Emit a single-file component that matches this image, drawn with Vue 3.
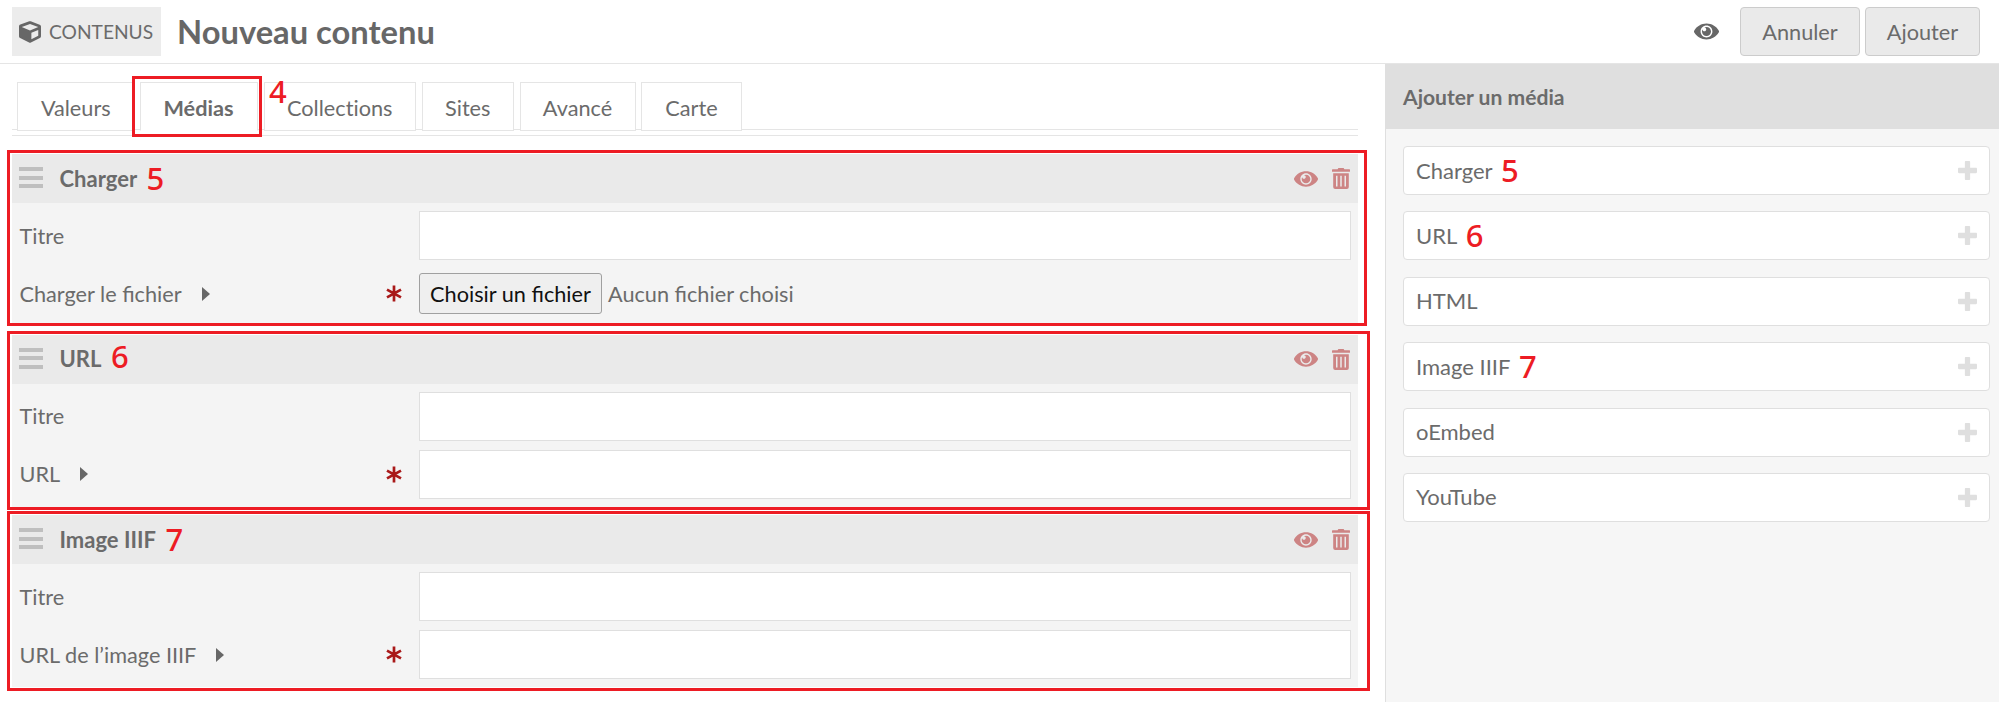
<script setup>
const tabs = [
  { label: 'Valeurs', w: 117.5 },
  { label: 'Médias', w: 118, active: true },
  { label: 'Collections', w: 152.5 },
  { label: 'Sites', w: 92.5 },
  { label: 'Avancé', w: 116 },
  { label: 'Carte', w: 101 },
]
const blocks = [
  { title: 'Charger', mark: '5', field: 'Charger le fichier', file: true },
  { title: 'URL', mark: '6', field: 'URL' },
  { title: 'Image IIIF', mark: '7', field: 'URL de l’image IIIF' },
]
const media = [
  { label: 'Charger', mark: '5' },
  { label: 'URL', mark: '6' },
  { label: 'HTML' },
  { label: 'Image IIIF', mark: '7' },
  { label: 'oEmbed' },
  { label: 'YouTube' },
]
const eye = 'M569.354 231.631C512.969 135.949 407.81 72 288 72 168.14 72 63.004 135.994 6.646 231.631a47.999 47.999 0 0 0 0 48.739C63.031 376.051 168.19 440 288 440c119.86 0 224.996-63.994 281.354-159.631a47.997 47.997 0 0 0 0-48.738zM288 392c-75.162 0-136-60.827-136-136 0-75.162 60.826-136 136-136 75.162 0 136 60.826 136 136 0 75.162-60.826 136-136 136zm104-136c0 57.438-46.562 104-104 104s-104-46.562-104-104c0-17.708 4.431-34.379 12.236-48.973l-.001.032c0 23.651 19.173 42.823 42.824 42.823s42.824-19.173 42.824-42.823c0-23.651-19.173-42.824-42.824-42.824l-.032.001C253.621 156.431 270.292 152 288 152c57.438 0 104 46.562 104 104z'
const cube = 'M239.1 6.3l-208 78c-18.7 7-31.1 25-31.1 45v225.1c0 18.2 10.3 34.8 26.5 42.9l208 104c13.5 6.8 29.4 6.8 42.9 0l208-104c16.3-8.1 26.5-24.8 26.5-42.9V129.3c0-20-12.4-37.9-31.1-44.9l-208-78C262 2.2 250 2.2 239.1 6.3zM256 68.4l192 72v1.1l-192 78-192-78v-1.1l192-72zm32 356V275.5l160-65v133.9l-160 80z'
const plus = 'M448 294.2v-76.4c0-13.3-10.7-24-24-24H286.2V56c0-13.3-10.7-24-24-24h-76.4c-13.3 0-24 10.7-24 24v137.8H24c-13.3 0-24 10.7-24 24v76.4c0 13.3 10.7 24 24 24h137.8V456c0 13.3 10.7 24 24 24h76.4c13.3 0 24-10.7 24-24V318.2H424c13.3 0 24-10.7 24-24z'
</script>

<template>
  <div class="page">
    <header class="top">
      <div class="crumb">
        <svg class="cube" viewBox="0 0 512 512"><path :d="cube" /></svg>
        <span>CONTENUS</span>
      </div>
      <h1>Nouveau contenu</h1>
      <div class="actions">
        <svg class="eye" viewBox="0 64 576 384"><path :d="eye" /></svg>
        <button class="btn annuler">Annuler</button>
        <button class="btn ajouter">Ajouter</button>
      </div>
    </header>
    <div class="body">
      <main>
        <nav class="tabs">
          <div v-for="t in tabs" :key="t.label" class="tab" :class="{ active: t.active }" :style="{ width: t.w + 'px' }">
            <span>{{ t.label }}</span>
            <i v-if="t.active" class="frame"></i>
            <b v-if="t.active" class="mark">4</b>
          </div>
        </nav>
        <section v-for="(b, i) in blocks" :key="b.title" class="block" :class="'block' + i">
          <div class="head">
            <span class="grip"><i></i><i></i><i></i></span>
            <strong>{{ b.title }}</strong>
            <b class="mark">{{ b.mark }}</b>
            <svg class="eye" viewBox="0 64 576 384"><path :d="eye" /></svg>
            <svg class="trash" viewBox="0 0 18 21">
              <path fill-rule="evenodd" d="M6.4 0h5.2l.8 1.2H17.4a.6.6 0 0 1 .6.6v1.6a.4.4 0 0 1-.4.4H.4a.4.4 0 0 1-.4-.4V1.8a.6.6 0 0 1 .6-.6H5.6zM1.2 5.2h15.6V19a2 2 0 0 1-2 2H3.2a2 2 0 0 1-2-2zM4 7.8v10.6h1.5V7.8zM8.25 7.8v10.6h1.5V7.8zM12.5 7.8v10.6H14V7.8z" />
            </svg>
          </div>
          <div class="row"><label>Titre</label><div class="input"></div></div>
          <div class="row">
            <label><span>{{ b.field }}</span><i class="caret"></i></label>
            <svg class="star" viewBox="0 0 16 17"><path d="M8 0.5v16M1 4.6l14 7.8M1 12.4l14-7.8" /></svg>
            <div v-if="b.file" class="file">
              <span class="choose">Choisir un fichier</span>
              <span>Aucun fichier choisi</span>
            </div>
            <div v-else class="input"></div>
          </div>
          <i class="frame"></i>
        </section>
      </main>
      <aside>
        <h2>Ajouter un média</h2>
        <div v-for="m in media" :key="m.label" class="item">
          <span>{{ m.label }}</span>
          <b v-if="m.mark" class="mark">{{ m.mark }}</b>
          <svg class="plus" viewBox="0 32 448 448"><path :d="plus" /></svg>
        </div>
      </aside>
    </div>
  </div>
</template>

<style>
body { margin: 0; background: #fff; }
</style>

<style scoped>
.page { width: 1999px; height: 722px; overflow: hidden; color: #6b6b6b; font: 21.7px/30px Lato, sans-serif; }
.page * { box-sizing: border-box; }
svg { fill: currentColor; flex: none; }
.top { display: flex; align-items: center; height: 64px; padding: 0 19px 0 12px; border-bottom: 1px solid #e5e5e5; }
.crumb { display: flex; align-items: center; gap: 8px; width: 149px; height: 49px; padding-left: 7px; background: #ececec; font-size: 19.2px; }
.cube { width: 22px; height: 22px; color: #676767; }
h1 { margin: 0 0 0 16px; font-size: 32.7px; line-height: 40px; font-weight: 700; color: #676767; }
.actions { display: flex; align-items: center; margin-left: auto; }
.eye { width: 25px; height: 17px; color: #676767; }
.btn { height: 49px; padding: 0; border: 1px solid #ccc; border-radius: 4px; background: #eaeaea; color: inherit; font: inherit; }
.annuler { width: 120px; margin-left: 21px; }
.ajouter { width: 115px; margin-left: 5px; }
.body { display: flex; height: 638px; }
main { width: 1385px; padding: 18px 27px 0 12px; }
.tabs { display: flex; gap: 5.5px; height: 54px; padding-left: 5px; border-bottom: 1px solid #e5e5e5; background: linear-gradient(#e5e5e5, #e5e5e5) 0 47px / 100% 1px no-repeat; font-variant-ligatures: none; }
.tab { position: relative; display: flex; justify-content: center; align-items: center; height: 49px; padding: 3px 0 0; border: 1px solid #e5e5e5; background: #fff; }
.active { padding-right: 1px; font-weight: 700; border-bottom-color: #fff; z-index: 1; }
.mark { color: #ed1c24; font: 500 31px/31px "Noto Sans", sans-serif; }
.frame { position: absolute; border: 3px solid #ed1c24; pointer-events: none; z-index: 1; }
.tab .frame { inset: -7px -5px -7px -9px; }
.tab .mark { position: absolute; left: 128px; top: -7px; }
.block { position: relative; height: 172px; background: #f4f4f4; }
.block0 { margin-top: 18px; }
.block1, .block2 { margin-top: 8.5px; }
.block .frame { inset: -4px -12px -4px -5px; }
.block0 .frame { right: -9px; bottom: 0; }
.block1 .frame { bottom: -3px; }
.head { display: flex; align-items: center; height: 49px; padding: 0 8px 0 7px; background: #eaeaea; margin-bottom: 8px; }
.head strong { font-size: 22px; }
.grip { display: flex; flex-direction: column; gap: 4.5px; width: 24px; margin: 0 16.5px 2px 0; }
.grip i { height: 4px; background: #bfbfbf; }
.head .mark { margin: 0 0 1px 9.5px; }
.block1 .head .mark { margin-bottom: 6px; }
.head svg { color: #cd8484; }
.head .eye { width: 24px; height: 16px; margin-left: auto; margin-right: 14px; }
.trash { width: 18px; height: 21px; }
.row { display: flex; align-items: center; height: 49px; margin-bottom: 9px; padding: 0 7px 0 7.5px; }
label { display: flex; align-items: center; }
.caret { margin-left: 20px; border: solid transparent; border-width: 7px 0 7px 8px; border-left-color: #676767; }
.star { width: 16px; height: 17px; margin-left: auto; margin-right: 17px; fill: none; stroke: #a91919; stroke-width: 2.7; }
.input { width: 932px; height: 49px; border: 1px solid #dfdfdf; background: #fff; }
.row label:first-child:nth-last-child(2) { margin-right: auto; }
.file { display: flex; align-items: center; width: 932px; gap: 6px; }
.choose { width: 183px; height: 41px; display: flex; align-items: center; justify-content: center; border: 1px solid #a0a0a0; border-radius: 3px; background: #efefef; color: #111; }
aside { width: 614px; border-left: 1px solid #dfdfdf; background: #f6f6f6; }
h2 { display: flex; align-items: center; height: 65px; margin: 0 0 17px; padding-left: 17px; background: #dfdfdf; font-size: 21.1px; }
.item { display: flex; align-items: center; width: 587px; height: 49px; margin: 0 0 16.4px 17px; padding: 0 12px; border: 1px solid #dfdfdf; border-radius: 4px; background: #fff; font-size: 22px; }
.item .mark { margin-left: 8.5px; }
.plus { width: 19px; height: 19px; margin-left: auto; color: #dfdfdf; }
</style>
